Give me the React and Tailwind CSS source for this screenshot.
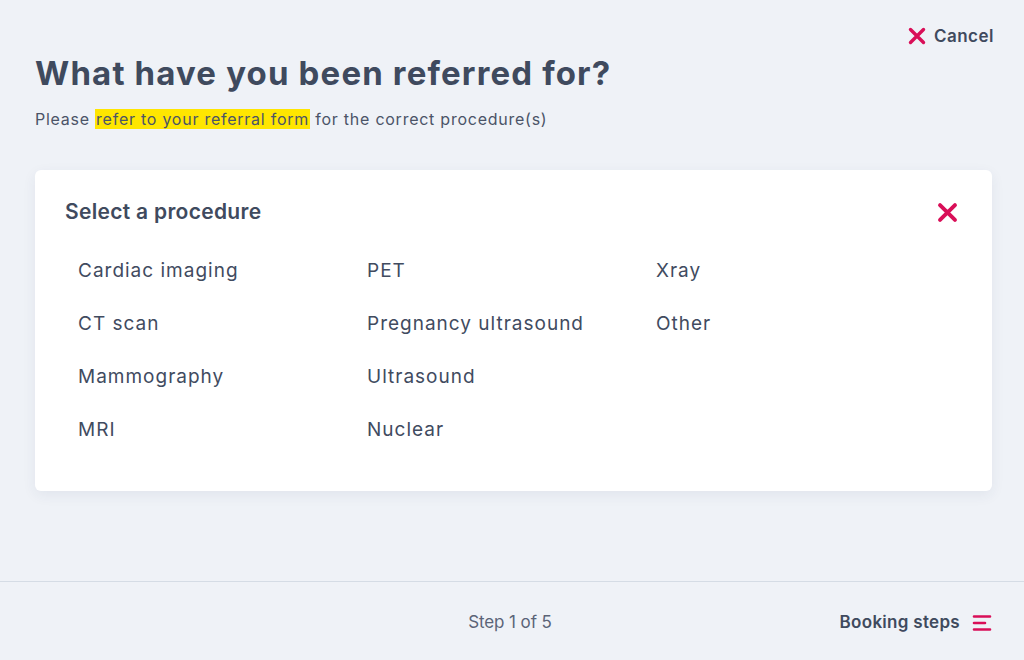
import React from 'react';

const procedures = [
  ['Cardiac imaging', 'CT scan', 'Mammography', 'MRI'],
  ['PET', 'Pregnancy ultrasound', 'Ultrasound', 'Nuclear'],
  ['Xray', 'Other'],
];

function Cross({ className }) {
  return (
    <svg viewBox="0 0 20 20" className={className} fill="none" stroke="currentColor" strokeWidth="3.4" strokeLinecap="round">
      <path d="M3.5 3.5l13 13M16.5 3.5l-13 13" />
    </svg>
  );
}

export default function App() {
  return (
    <div
      className="w-[1024px] h-[660px] bg-[#eff2f7] flex flex-col text-[#3f4a5e]"
      style={{ fontFamily: 'Inter, "Noto Sans", sans-serif' }}
    >
      {/* Main */}
      <div className="flex-1 flex flex-col pl-[35px] pr-[32px] pt-[24px]">
        <div className="flex justify-end">
          <button className="flex items-center gap-[7px] text-[17px] leading-[24px] font-semibold tracking-[0.5px] text-[#3f4a5e] -mr-[2px]">
            <Cross className="w-[20px] h-[20px] text-[#d90f58]" />
            Cancel
          </button>
        </div>

        <h1 className="mt-[5px] text-[33px] leading-[40px] font-bold tracking-[1.15px] text-[#3f4a5e]">
          What have you been referred for?
        </h1>
        <p className="mt-[15px] text-[16px] leading-[22px] tracking-[0.75px] text-[#4b5467]">
          Please <span className="bg-[#ffe600] px-[1px]">refer to your referral form</span> for the correct procedure(s)
        </p>

        {/* Card */}
        <div className="mt-[40px] bg-white rounded-[6px] shadow-[0_4px_14px_rgba(40,60,100,0.07)] h-[321px] pt-[27px] px-[30px]">
          <div className="flex items-center justify-between">
            <h2 className="text-[21px] font-semibold leading-[30px] tracking-[0.3px]">Select a procedure</h2>
            <button className="mr-[3px]">
              <Cross className="w-[23px] h-[23px] text-[#d90f58]" />
            </button>
          </div>
          <div className="grid grid-cols-[289px_289px_1fr] mt-[30px] pl-[13px]">
            {procedures.map((col, i) => (
              <div key={i} className="flex flex-col gap-[26px]">
                {col.map((p) => (
                  <span key={p} className="text-[19px] leading-[27px] tracking-[1px] text-[#414b5f]">{p}</span>
                ))}
              </div>
            ))}
          </div>
        </div>
      </div>

      {/* Footer */}
      <div className="h-[79px] border-t border-[#d5dce5] flex items-center pl-[32px] pr-[32px] pt-[3px]">
        <div className="flex-1" />
        <span className="text-[17px] tracking-[-0.1px] text-[#5b6477] -ml-[4px]">Step 1 of 5</span>
        <div className="flex-1 flex justify-end items-center gap-[12px]">
          <span className="text-[17px] font-semibold tracking-[0.3px]">Booking steps</span>
          <svg viewBox="0 0 20 20" className="w-[20px] h-[20px] text-[#d90f58]" fill="none" stroke="currentColor" strokeWidth="2.6" strokeLinecap="round">
            <path d="M2 3.5h16M2 10h11M2 16.5h16" />
          </svg>
        </div>
      </div>
    </div>
  );
}
